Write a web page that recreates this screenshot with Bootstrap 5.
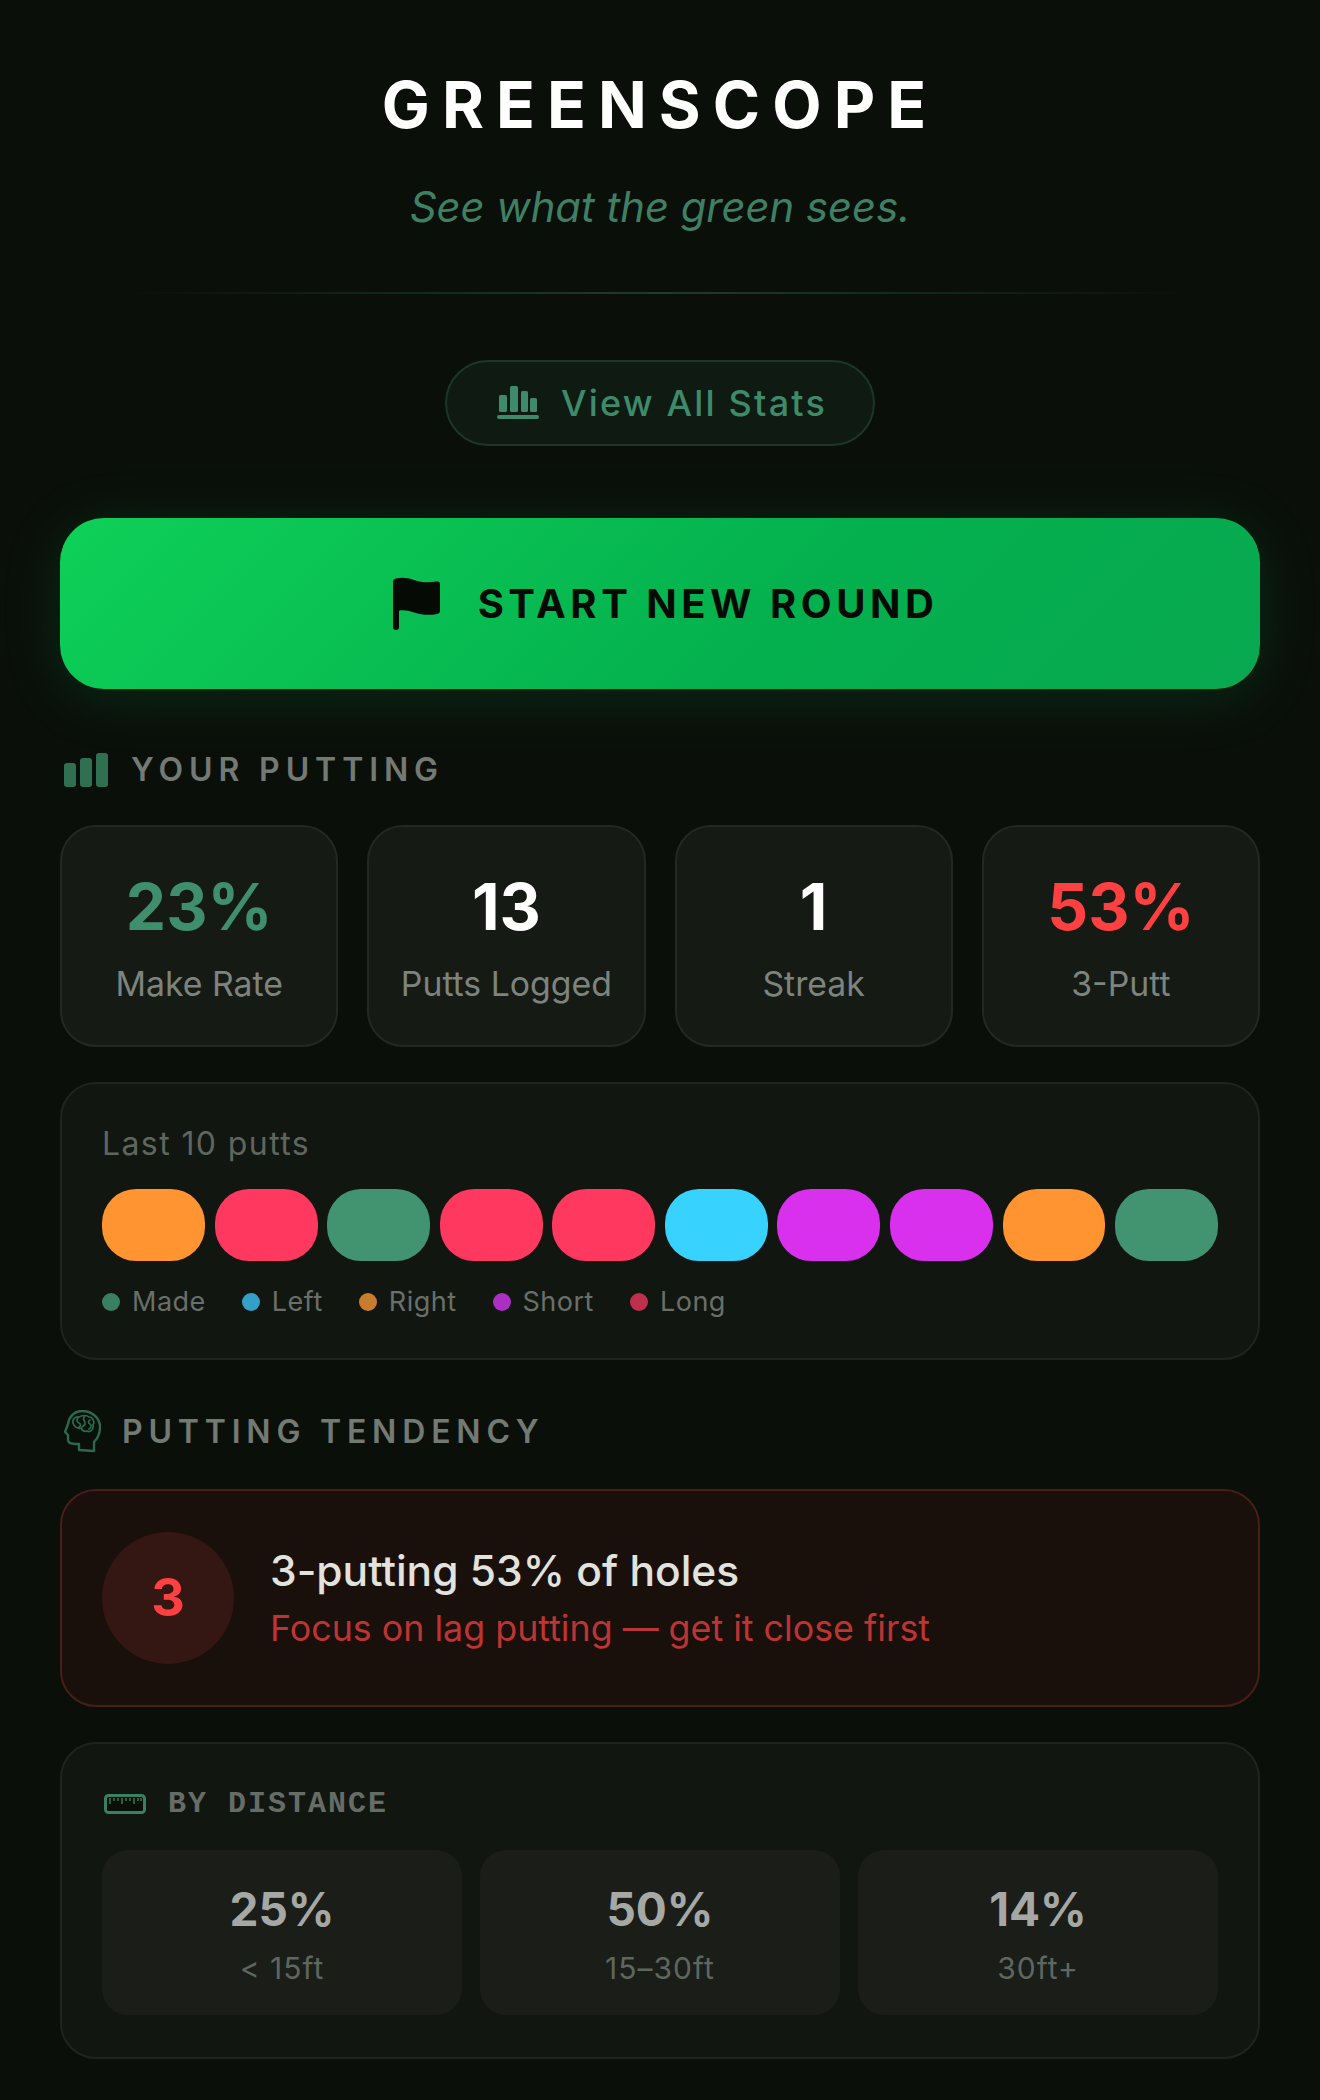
<!DOCTYPE html>
<html lang="en">
<head>
    <meta charset="UTF-8">
    <meta name="viewport" content="width=device-width, initial-scale=1.0">
    <title>GreenScope</title>
    <link href="https://cdn.jsdelivr.net/npm/bootstrap@5.3.3/dist/css/bootstrap.min.css" rel="stylesheet">
    <style>
        body { background-color: #0a0f0a; font-family: "Inter", "Liberation Sans", sans-serif; color: #fff; height: 2100px; overflow: hidden; }
        .page-wrap { padding: 0 60px; }
        .brand-title { font-size: 64px; font-weight: 700; line-height: 78px; letter-spacing: 12.1px; margin: 66px 0 0; color: #fff; }
        .brand-tag { font-size: 41.8px; font-style: italic; line-height: 48px; color: #3f7f63; margin: 39px 0 0; }
        .brand-rule { height: 2px; margin: 61px 70px 0; background: linear-gradient(to right, transparent, #1e3d2e 50%, transparent); }
        .stats-link { width: 430px; height: 86px; margin: 66px auto 0; padding-left: 4px; border: 2px solid #1c3729; border-radius: 43px; background: #0e1a12; color: #3f8a6a; font-size: 36px; font-weight: 500; letter-spacing: 2.2px; gap: 22px; }
        .start-btn { height: 171px; margin-top: 72px; padding-left: 10px; border-radius: 44px; background: linear-gradient(135deg, #0ed058, #04b04e 60%, #08a850); box-shadow: 0 8px 60px rgba(8, 190, 80, .16); color: #050a05; font-size: 40px; font-weight: 700; letter-spacing: 4.5px; gap: 36px; }
        .sect-head { color: #737a73; font-size: 32px; font-weight: 600; letter-spacing: 5.9px; line-height: 40px; }
        .head-one { margin-top: 61px; gap: 23px; padding-left: 4px; }
        .head-two { margin-top: 50px; gap: 21px; padding-left: 4px; letter-spacing: 5.800px; }
        .stat-row { margin-top: 35px; gap: 29px; }
        .stat-box { flex: 1 1 0; height: 222px; background: #161a14; border: 2px solid #232823; border-radius: 36px; text-align: center; padding-top: 44px; }
        .stat-num { font-size: 64px; font-weight: 700; line-height: 72px; }
        .stat-lbl { font-size: 33.800px; line-height: 40px; color: #7d837d; margin-top: 21px; }
        .num-green { color: #3f8f6c; }
        .num-red { color: #ff4040; }
        .panel-box { background: #121610; border: 2px solid #1f241f; border-radius: 36px; padding: 40px; }
        .last-panel { margin-top: 35px; height: 278px; }
        .last-lbl { font-size: 32px; line-height: 38px; color: #5f665f; margin-top: 1px; letter-spacing: 1.400px; }
        .chip-row { margin-top: 26px; gap: 9.6px; }
        .putt-chip { flex: 1 1 0; height: 72px; border-radius: 34px; }
        .chip-or { background: #ff9430; }
        .chip-re { background: #ff3860; }
        .chip-gr { background: #429470; }
        .chip-bl { background: #38d2ff; }
        .chip-pu { background: #d930ee; }
        .legend-row { margin-top: 24px; gap: 36px; font-size: 27px; line-height: 34px; color: #696f69; letter-spacing: .5px; }
        .legend-dot { width: 18px; height: 18px; border-radius: 50%; margin-right: 12px; }
        .tend-card { margin-top: 36px; height: 218px; background: #190f0b; border: 2px solid #4a1d18; border-radius: 36px; padding: 0 40px; gap: 36px; }
        .tend-circle { width: 132px; height: 132px; border-radius: 50%; background: #341612; color: #ff4040; font-size: 52px; font-weight: 700; }
        .tend-title { font-size: 42.5px; font-weight: 500; line-height: 48px; color: #e2e2de; }
        .tend-sub { font-size: 35.8px; line-height: 44px; color: #bd3434; margin-top: 11px; }
        .dist-panel { margin-top: 35px; height: 317px; padding-top: 42px; }
        .dist-head { font-family: "Liberation Mono", monospace; font-size: 30px; font-weight: 700; line-height: 36px; letter-spacing: 2px; color: #666c66; gap: 22px; padding-left: 2px; }
        .dist-row { margin-top: 28px; gap: 18px; }
        .dist-box { flex: 1 1 0; height: 165px; background: #1a1d18; border-radius: 26px; text-align: center; padding-top: 31px; }
        .dist-num { font-size: 46px; font-weight: 700; line-height: 56px; color: #a5a8a5; }
        .dist-lbl { font-size: 30px; line-height: 36px; color: #5f665f; margin-top: 13px; letter-spacing: 1px; }
    </style>
</head>
<body>
    <div class="page-wrap">
        <div class="text-center">
            <h1 class="brand-title">GREENSCOPE</h1>
            <p class="brand-tag">See what the green sees.</p>
        </div>
        <div class="brand-rule"></div>

        <div class="stats-link d-flex align-items-center justify-content-center">
            <svg width="42" height="34" viewBox="0 0 42 34" fill="#3f8a6a"><rect x="2" y="9" width="8" height="17" rx="1.500"/><rect x="13" y="0" width="8" height="26" rx="1.500"/><rect x="24" y="5" width="7" height="21" rx="1.500"/><rect x="33" y="12" width="7" height="14" rx="1.500"/><rect x="0" y="29" width="42" height="4" rx="2"/></svg>
            <span>View All Stats</span>
        </div>

        <div class="start-btn d-flex align-items-center justify-content-center">
            <svg width="50" height="54" viewBox="0 0 50 54"><path fill="#050a05" d="M1 5c0-2 1-3 3-3.500 6-1.500 12-.5 18 1.500 7 2.300 14 3 22 1.500 3-.5 4 .5 4 3v26c0 2-.5 3-3 3.500-8 1.500-15 1-23-1.500-6-2-11-2.800-15-1.800V50c0 2-1 3-3 3s-3-1-3-3z"/></svg>
            <span>START NEW ROUND</span>
        </div>

        <div class="sect-head head-one d-flex align-items-center">
            <svg width="44" height="34" viewBox="0 0 44 34" fill="#2f7051"><rect x="0" y="10" width="12" height="24" rx="3"/><rect x="16" y="5" width="12" height="29" rx="3"/><rect x="32" y="0" width="12" height="34" rx="3"/></svg>
            <span>YOUR PUTTING</span>
        </div>

        <div class="stat-row d-flex">
            <div class="stat-box"><div class="stat-num num-green">23%</div><div class="stat-lbl">Make Rate</div></div>
            <div class="stat-box"><div class="stat-num">13</div><div class="stat-lbl">Putts Logged</div></div>
            <div class="stat-box"><div class="stat-num">1</div><div class="stat-lbl">Streak</div></div>
            <div class="stat-box"><div class="stat-num num-red">53%</div><div class="stat-lbl">3-Putt</div></div>
        </div>

        <div class="panel-box last-panel">
            <div class="last-lbl">Last 10 putts</div>
            <div class="chip-row d-flex">
                <div class="putt-chip chip-or"></div>
                <div class="putt-chip chip-re"></div>
                <div class="putt-chip chip-gr"></div>
                <div class="putt-chip chip-re"></div>
                <div class="putt-chip chip-re"></div>
                <div class="putt-chip chip-bl"></div>
                <div class="putt-chip chip-pu"></div>
                <div class="putt-chip chip-pu"></div>
                <div class="putt-chip chip-or"></div>
                <div class="putt-chip chip-gr"></div>
            </div>
            <div class="legend-row d-flex">
                <div class="d-flex align-items-center"><span class="legend-dot" style="background:#38805f"></span>Made</div>
                <div class="d-flex align-items-center"><span class="legend-dot" style="background:#33a0c8"></span>Left</div>
                <div class="d-flex align-items-center"><span class="legend-dot" style="background:#c87c2e"></span>Right</div>
                <div class="d-flex align-items-center"><span class="legend-dot" style="background:#a930c0"></span>Short</div>
                <div class="d-flex align-items-center"><span class="legend-dot" style="background:#c0304e"></span>Long</div>
            </div>
        </div>

        <div class="sect-head head-two d-flex align-items-center">
            <svg width="37" height="43" viewBox="0 0 37 43" fill="none" stroke="#2a6b4e" stroke-width="2.400" stroke-linecap="round" stroke-linejoin="round"><path d="M30 41V32C34 28 36 23 36 17 36 8 28 1 18 1 10 1 5 7 4 14L1 22l3 3v5c0 3 3 4 8 4h3v6z"/><path d="M9 13c-1-4 3-7 6-6 3-2 8-2 10 0 4 0 6 5 4 8 1 4-3 8-6 6-3 1-5-1-6-3-3 1-7-1-8-5zM14 8c-2 2-1 4 1 5 2 1 2 3 0 4M20 7c-2 3 2 4 1 7-1 2-2 2-3 3M26 10c-2 1-2 3 0 4s1 4-1 5" stroke-width="1.700"/></svg>
            <span>PUTTING TENDENCY</span>
        </div>

        <div class="tend-card d-flex align-items-center">
            <div class="tend-circle d-flex align-items-center justify-content-center">3</div>
            <div>
                <div class="tend-title">3-putting 53% of holes</div>
                <div class="tend-sub">Focus on lag putting — get it close first</div>
            </div>
        </div>

        <div class="panel-box dist-panel">
            <div class="dist-head d-flex align-items-center">
                <svg width="42" height="20" viewBox="0 0 42 20" fill="none"><rect x="1.500" y="1.500" width="39" height="17" rx="3" fill="#0a0f0a" stroke="#38805f" stroke-width="3"/><path d="M6 4v6M10 4v3M14 4v3M18 4v6M22 4v3M26 4v3M30 4v6M34 4v3M37 4v3" stroke="#38805f" stroke-width="1.400"/></svg>
                <span>BY DISTANCE</span>
            </div>
            <div class="dist-row d-flex">
                <div class="dist-box"><div class="dist-num">25%</div><div class="dist-lbl">&lt; 15ft</div></div>
                <div class="dist-box"><div class="dist-num">50%</div><div class="dist-lbl">15–30ft</div></div>
                <div class="dist-box"><div class="dist-num">14%</div><div class="dist-lbl">30ft+</div></div>
            </div>
        </div>
    </div>
    <script src="https://cdn.jsdelivr.net/npm/bootstrap@5.3.3/dist/js/bootstrap.bundle.min.js"></script>
</body>
</html>
